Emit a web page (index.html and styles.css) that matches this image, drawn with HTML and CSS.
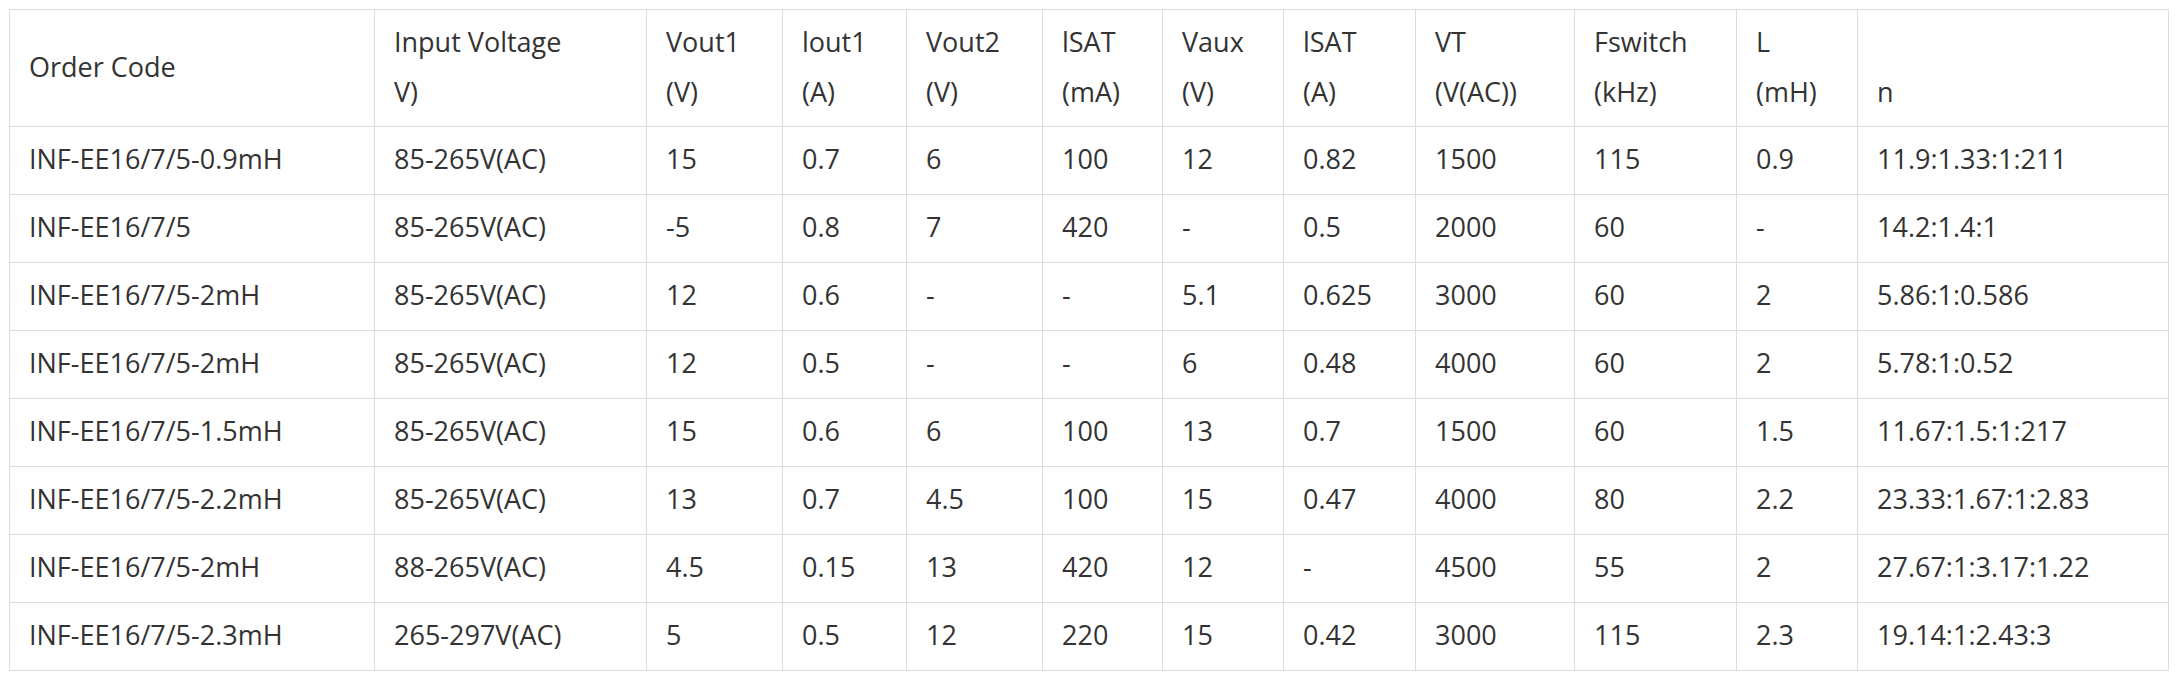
FILE: index.html
```html
<!DOCTYPE html>
<html>
<head>
<meta charset="utf-8">
<link rel="stylesheet" href="styles.css">
</head>
<body>
<div class="wrap">
<table class="spec">
<colgroup>
<col class="c1"><col class="c2"><col class="c3"><col class="c4"><col class="c5"><col class="c6"><col class="c7"><col class="c8"><col class="c9"><col class="c10"><col class="c11"><col class="c12">
</colgroup>
<thead>
<tr>
<th>Order Code</th>
<th>Input Voltage<br>V)</th>
<th>Vout1<br>(V)</th>
<th>lout1<br>(A)</th>
<th>Vout2<br>(V)</th>
<th>lSAT<br>(mA)</th>
<th>Vaux<br>(V)</th>
<th>lSAT<br>(A)</th>
<th>VT<br>(V(AC))</th>
<th>Fswitch<br>(kHz)</th>
<th>L<br>(mH)</th>
<th><br>n</th>
</tr>
</thead>
<tbody>
<tr><td>INF-EE16/7/5-0.9mH</td><td>85-265V(AC)</td><td>15</td><td>0.7</td><td>6</td><td>100</td><td>12</td><td>0.82</td><td>1500</td><td>115</td><td>0.9</td><td>11.9:1.33:1:211</td></tr>
<tr><td>INF-EE16/7/5</td><td>85-265V(AC)</td><td>-5</td><td>0.8</td><td>7</td><td>420</td><td>-</td><td>0.5</td><td>2000</td><td>60</td><td>-</td><td>14.2:1.4:1</td></tr>
<tr><td>INF-EE16/7/5-2mH</td><td>85-265V(AC)</td><td>12</td><td>0.6</td><td>-</td><td>-</td><td>5.1</td><td>0.625</td><td>3000</td><td>60</td><td>2</td><td>5.86:1:0.586</td></tr>
<tr><td>INF-EE16/7/5-2mH</td><td>85-265V(AC)</td><td>12</td><td>0.5</td><td>-</td><td>-</td><td>6</td><td>0.48</td><td>4000</td><td>60</td><td>2</td><td>5.78:1:0.52</td></tr>
<tr><td>INF-EE16/7/5-1.5mH</td><td>85-265V(AC)</td><td>15</td><td>0.6</td><td>6</td><td>100</td><td>13</td><td>0.7</td><td>1500</td><td>60</td><td>1.5</td><td>11.67:1.5:1:217</td></tr>
<tr><td>INF-EE16/7/5-2.2mH</td><td>85-265V(AC)</td><td>13</td><td>0.7</td><td>4.5</td><td>100</td><td>15</td><td>0.47</td><td>4000</td><td>80</td><td>2.2</td><td>23.33:1.67:1:2.83</td></tr>
<tr><td>INF-EE16/7/5-2mH</td><td>88-265V(AC)</td><td>4.5</td><td>0.15</td><td>13</td><td>420</td><td>12</td><td>-</td><td>4500</td><td>55</td><td>2</td><td>27.67:1:3.17:1.22</td></tr>
<tr><td>INF-EE16/7/5-2.3mH</td><td>265-297V(AC)</td><td>5</td><td>0.5</td><td>12</td><td>220</td><td>15</td><td>0.42</td><td>3000</td><td>115</td><td>2.3</td><td>19.14:1:2.43:3</td></tr>
</tbody>
</table>
</div>
</body>
</html>
```

FILE: styles.css
```css
html, body {
  margin: 0;
  padding: 0;
  background: #ffffff;
}
.wrap {
  padding: 9px;
}
.spec {
  border-collapse: collapse;
  table-layout: fixed;
  width: 2160px;
  font-family: "Open Sans", "Noto Sans", sans-serif;
  font-size: 27px;
  color: #333333;
}
.spec th,
.spec td {
  border: 1px solid #dddddd;
  text-align: left;
  vertical-align: middle;
  font-weight: normal;
  white-space: nowrap;
}
.spec th {
  line-height: 50px;
  padding: 7px 8px 9px 19px;
}
.spec td {
  line-height: 51px;
  padding: 6px 8px 10px 19px;
}
.c1 { width: 365px; }
.c2 { width: 272px; }
.c3 { width: 136px; }
.c4 { width: 124px; }
.c5 { width: 136px; }
.c6 { width: 120px; }
.c7 { width: 121px; }
.c8 { width: 132px; }
.c9 { width: 159px; }
.c10 { width: 162px; }
.c11 { width: 121px; }
.c12 { width: 311px; }
```
